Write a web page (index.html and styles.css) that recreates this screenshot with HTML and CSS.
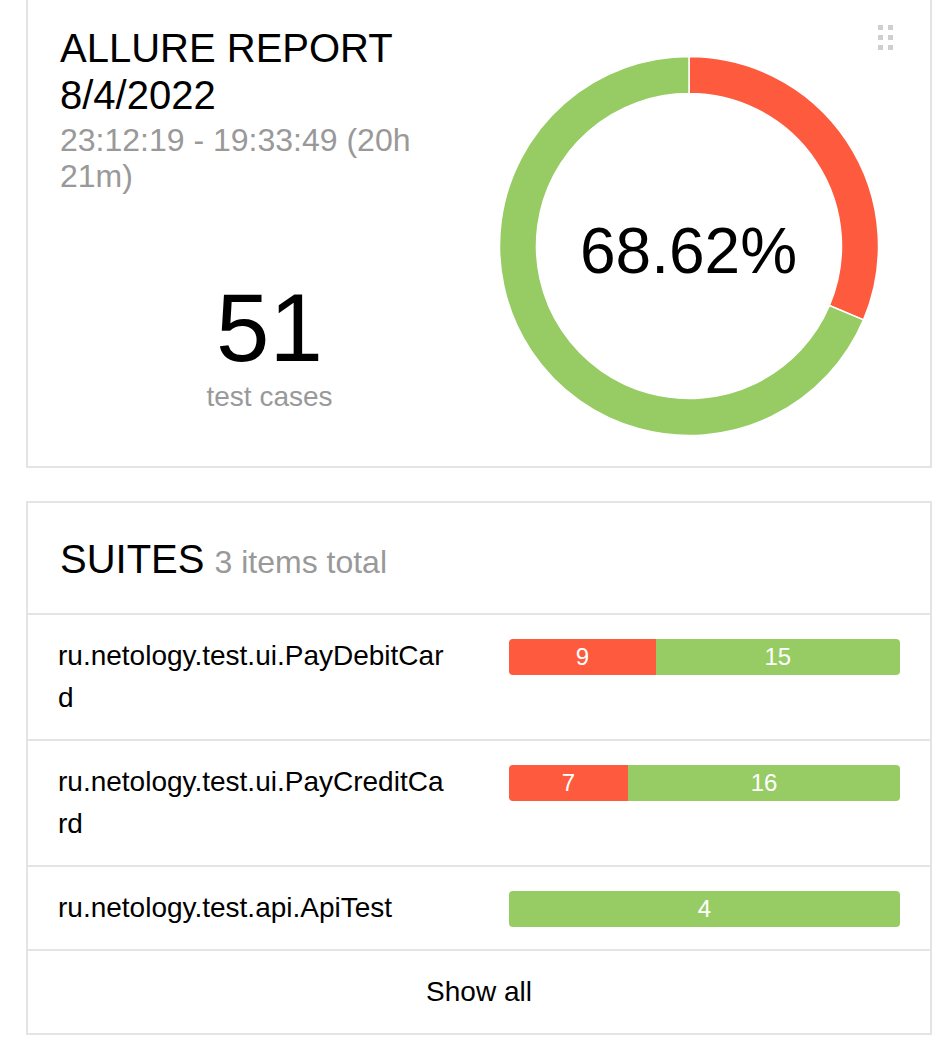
FILE: index.html
```html
<!DOCTYPE html>
<html lang="en">
<head>
<meta charset="utf-8">
<title>Allure Report</title>
<link rel="stylesheet" href="styles.css">
</head>
<body>
<main class="page">
  <section class="card summary">
    <div class="summary__info">
      <h2 class="summary__title">ALLURE REPORT 8/4/2022</h2>
      <div class="summary__time">23:12:19 - 19:33:49 (20h 21m)</div>
      <div class="summary__stats">
        <div class="summary__count">51</div>
        <div class="summary__label">test cases</div>
      </div>
    </div>
    <div class="summary__chart">
      <div class="donut">
        <svg class="donut__svg" width="380" height="380" viewBox="0 0 380 380">
          <path class="donut__failed" d="M190,0.5 A189.5,189.5 0 0 1 364.5,263.9 L330.4,249.5 A152.5,152.5 0 0 0 190,37.5 Z"/>
          <path class="donut__passed" d="M364.5,263.9 A189.5,189.5 0 1 1 190,0.5 L190,37.5 A152.5,152.5 0 1 0 330.4,249.5 Z"/>
        </svg>
        <div class="donut__value">68.62%</div>
      </div>
    </div>
    <span class="drag-handle" aria-hidden="true">
      <i></i><i></i><i></i><i></i><i></i><i></i>
    </span>
  </section>

  <section class="card suites">
    <header class="suites__header">
      <span class="suites__title">SUITES</span>
      <span class="suites__total">3 items total</span>
    </header>
    <ul class="suites__list">
      <li class="suite">
        <span class="suite__name">ru.netology.test.ui.PayDebitCard</span>
        <div class="bar">
          <span class="bar__seg bar__seg--failed" style="width:37.5%">9</span>
          <span class="bar__seg bar__seg--passed" style="width:62.5%">15</span>
        </div>
      </li>
      <li class="suite">
        <span class="suite__name">ru.netology.test.ui.PayCreditCard</span>
        <div class="bar">
          <span class="bar__seg bar__seg--failed" style="width:30.43%">7</span>
          <span class="bar__seg bar__seg--passed" style="width:69.57%">16</span>
        </div>
      </li>
      <li class="suite">
        <span class="suite__name">ru.netology.test.api.ApiTest</span>
        <div class="bar">
          <span class="bar__seg bar__seg--passed" style="width:100%">4</span>
        </div>
      </li>
    </ul>
    <a class="suites__footer" href="#">Show all</a>
  </section>
</main>
</body>
</html>
```

FILE: styles.css
```css
* {
  box-sizing: border-box;
}

html, body {
  margin: 0;
  padding: 0;
  background: #fff;
}

body {
  font-family: "Liberation Sans", Arial, Helvetica, sans-serif;
  color: #000;
}

.page {
  width: 932px;
  padding-left: 26px;
}

.card {
  position: relative;
  background: #fff;
  border: 2px solid #e4e4e4;
}

/* ---------- summary widget ---------- */
.summary {
  border-top-width: 0;
  display: grid;
  grid-template-columns: 1fr 1fr;
  padding: 25px 32px 0;
}

.summary__info {
  display: flex;
  flex-direction: column;
}

.summary__title {
  margin: 0;
  font-size: 40px;
  line-height: 47px;
  font-weight: 400;
}

.summary__time {
  margin-top: 3px;
  font-size: 32px;
  line-height: 36px;
  color: #999;
}

.summary__stats {
  margin-top: 86px;
  text-align: center;
}

.summary__count {
  font-size: 96px;
  line-height: 96px;
}

.summary__label {
  margin-top: 4px;
  font-size: 28px;
  line-height: 34px;
  color: #999;
}

.summary__chart {
  display: flex;
  justify-content: center;
  padding: 31px 0 30px;
}

.donut {
  position: relative;
  width: 380px;
  height: 380px;
}

.donut__svg {
  display: block;
}

.donut__failed {
  fill: #fd5a3e;
  stroke: #fff;
  stroke-width: 1.5;
}

.donut__passed {
  fill: #97cc64;
  stroke: #fff;
  stroke-width: 1.5;
}

.donut__value {
  position: absolute;
  inset: 0;
  display: flex;
  align-items: center;
  justify-content: center;
  padding-top: 10px;
  font-size: 64px;
  line-height: 64px;
}

.drag-handle {
  position: absolute;
  top: 25px;
  right: 37px;
  display: grid;
  grid-template-columns: 5px 5px;
  grid-auto-rows: 5px;
  gap: 5px;
}

.drag-handle i {
  display: block;
  background: #cfcfcf;
}

/* ---------- suites widget ---------- */
.suites {
  margin-top: 33px;
}

.suites__header {
  display: flex;
  align-items: baseline;
  gap: 10px;
  height: 112px;
  padding: 33px 32px 0;
  border-bottom: 2px solid #e4e4e4;
}

.suites__title {
  font-size: 40px;
  line-height: 46px;
}

.suites__total {
  font-size: 32px;
  line-height: 40px;
  color: #999;
}

.suites__list {
  list-style: none;
  margin: 0;
  padding: 0;
}

.suite {
  display: grid;
  grid-template-columns: 1fr 391px;
  column-gap: 59px;
  align-items: start;
  padding: 20px 30px;
  border-bottom: 2px solid #e4e4e4;
}

.suite__name {
  font-size: 28px;
  line-height: 42px;
  word-break: break-all;
}

.bar {
  display: flex;
  height: 36px;
  margin-top: 4px;
  border-radius: 4px;
  overflow: hidden;
}

.bar__seg {
  display: block;
  color: #fff;
  font-size: 24px;
  line-height: 36px;
  text-align: center;
}

.bar__seg--failed {
  background: #fd5a3e;
}

.bar__seg--passed {
  background: #97cc64;
}

.suites__footer {
  display: block;
  padding: 20px;
  font-size: 28px;
  line-height: 42px;
  text-align: center;
  color: #000;
  text-decoration: none;
}
```
